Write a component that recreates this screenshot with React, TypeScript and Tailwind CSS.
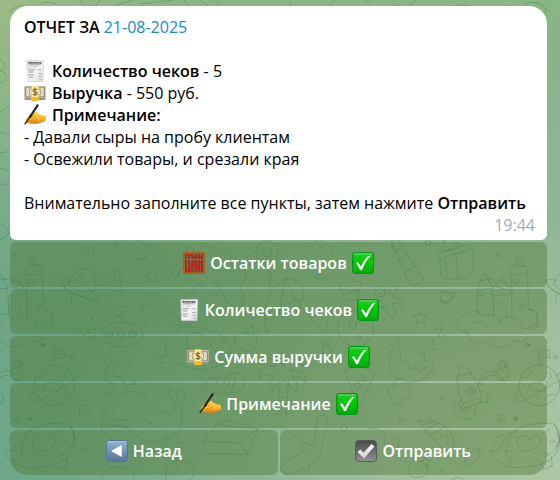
import React from "react";

type KeyButtonProps = { children: React.ReactNode; className?: string };
const iconClass = "inline-block h-[22px] w-[22px] shrink-0 align-top";

function ReceiptIcon() {
  return (
    <svg viewBox="0 0 22 22" className={iconClass} aria-hidden="true">
      <defs>
        <linearGradient id="paper" x1="0" y1="0" x2="1" y2="1">
          <stop offset="0" stopColor="#d9d9d9" />
          <stop offset="0.5" stopColor="#f5f5f5" />
          <stop offset="1" stopColor="#dcdcdc" />
        </linearGradient>
      </defs>
      <path d="M2.700 .5h17l-.7 21H3.500z" fill="url(#paper)" stroke="#cfcfcf" strokeWidth=".6" />
      <path d="M4.500 2.800h13.500" stroke="#5b5b5b" strokeWidth="1.800" strokeDasharray="1.500 .4" />
      <path d="M5.500 4.800h11.500" stroke="#909090" strokeWidth=".8" />
      <path d="M9 7h4" stroke="#b5b5b5" strokeWidth=".7" />
      <path d="M4.500 9.800h6.500M5 12h4.500M4.500 15h5.500M5 17.200h4" stroke="#949494" strokeWidth=".9" />
      <path d="M13 9.700h4.500M14 13.500h4M14 16.200h4M15 19.300h3" stroke="#aaa" strokeWidth=".8" />
    </svg>
  );
}

function MoneyIcon() {
  return (
    <svg viewBox="0 0 22 22" className={iconClass} aria-hidden="true">
      <path d="M.5 4.500h21v12.500l-.5 1H1l-.5-1z" fill="#9a927f" />
      <path d="M.5 4h21v12h-21z" fill="#cfc7b2" />
      <path d="M1.500 5.200h19v9.600h-19z" fill="none" stroke="#8b8473" strokeWidth=".8" />
      <path d="M3 7.500c2 0 2 5.500 0 5.500M19 7.500c-2 0-2 5.500 0 5.500" fill="none" stroke="#f2ecd9" strokeWidth="1.500" />
      <ellipse cx="11" cy="10.200" rx="5.800" ry="4.600" fill="#ece4cf" stroke="#8b8473" strokeWidth=".8" />
      <path d="M7.700 3.500h6.600v11.500h-6.600z" fill="#fff0a0" />
      <path d="M7.700 15h6.600v4h-6.600z" fill="#f2bd25" />
      <path d="M7.700 3.500v15.500M14.300 3.500v15.500" stroke="#f0cd52" strokeWidth=".8" />
      <path d="M13 7.800c-.7-1-3.900-1.300-3.900.6 0 2 4 1 4 3.100 0 2-3.400 1.800-4.200.5M11 5.600v8.400" fill="none" stroke="#75633c" strokeWidth="1.100" />
    </svg>
  );
}

function WritingIcon() {
  return (
    <svg viewBox="0 0 22 22" className={iconClass} aria-hidden="true">
      <defs>
        <linearGradient id="skin" x1="0" y1="0" x2="0" y2="1">
          <stop offset="0" stopColor="#ffd24b" />
          <stop offset=".6" stopColor="#fcb62d" />
          <stop offset="1" stopColor="#d97908" />
        </linearGradient>
      </defs>
      <path d="M2 16c.3-1.800 2.400-3.900 4-5.500 1.500-1.500 5-2.900 6.700-2.500 1 .3 1.200 1 .9 1.700 2 .1 3.200 1.300 4.700 1.600 1.200.2 2.600-.1 3.200.7.8 1.800.6 4.300-.4 5.500-2.500.2-3.800 1.500-6.600 1.900-3.800.5-8.500.4-10.700-.1-1.500-.4-2.200-1.500-1.800-3.300z" fill="url(#skin)" />
      <path d="M7.500 13.300c1.600-.2 3-1.200 4-2.300M4.500 16.200c2.200.3 4 .1 5.500-.9M12 13.800c.9 1.400 0 2.700-2 3.400" fill="none" stroke="#d98210" strokeWidth=".7" />
      <path d="M13.500 1.500L6 12.800" stroke="#171717" strokeWidth="2.200" strokeLinecap="round" />
      <path d="M5.800 13L1 19.800" stroke="#292929" strokeWidth="1.400" strokeLinecap="round" />
      <path d="M13 2.800L7 11.500" stroke="#626262" strokeWidth=".5" />
    </svg>
  );
}

function AbacusIcon() {
  return (
    <svg viewBox="0 0 22 22" className={iconClass} aria-hidden="true">
      <rect x="1" y="1" width="20" height="20" fill="#6b4a2c" stroke="#a5601f" strokeWidth="2" />
      <path d="M2 7.500h18" stroke="#a5601f" strokeWidth="1" />
      <path d="M4.500 2v18M7.700 2v18M11 2v18M14.300 2v18M17.500 2v18" stroke="#b98450" strokeWidth=".6" />
      <path d="M3.200 3.200h2.700M6.400 3.200h2.700M9.700 5.300h2.700M13 5.300h2.700M16.200 5.300h2.700M3.200 9.800h2.700M3.200 16.500h2.700M3.200 18.700h2.700M6.400 12h2.700M6.400 14.300h2.700M6.400 18.700h2.700M9.700 9.800h2.700M9.700 12h2.700M9.700 14.300h2.700M13 9.800h2.700M13 14.300h2.700M13 16.500h2.700M16.200 9.800h2.700M16.200 12h2.700M16.200 16.500h2.700M16.200 18.700h2.700" stroke="#d9161a" strokeWidth="1.700" />
    </svg>
  );
}

function CheckIcon() {
  return (
    <svg viewBox="0 0 22 22" className={iconClass} aria-hidden="true">
      <defs>
        <linearGradient id="green" x1="0" y1="0" x2="0" y2="1">
          <stop offset="0" stopColor="#35c53c" />
          <stop offset=".3" stopColor="#00cf05" />
          <stop offset="1" stopColor="#00ad07" />
        </linearGradient>
      </defs>
      <rect x=".6" y=".6" width="20.800" height="20.800" rx="2.800" fill="url(#green)" stroke="#07951a" strokeWidth="1.200" />
      <path d="M2.500 1.900h17" stroke="#6fda72" strokeWidth="1" strokeLinecap="round" />
      <path d="M3.800 11.300l2.100-1.200 3.100 4.300c1.800-4.100 4.200-7.700 7.200-10.400l2.400-.3c-3.600 4-6.400 8.600-8.400 14l-2.100.5c-1.100-2.700-2.600-5-4.300-6.900z" fill="white" />
    </svg>
  );
}

function BackIcon() {
  return (
    <svg viewBox="0 0 22 22" className={iconClass} aria-hidden="true">
      <defs>
        <linearGradient id="blue" x1="0" y1="0" x2="0" y2="1">
          <stop offset="0" stopColor="#94b2d4" />
          <stop offset=".5" stopColor="#7392b5" />
          <stop offset="1" stopColor="#587699" />
        </linearGradient>
      </defs>
      <rect x=".5" y=".5" width="21" height="21" rx="3" fill="url(#blue)" stroke="#557398" />
      <path d="M2.500 1.700h17" stroke="#b3c9e4" strokeLinecap="round" />
      <path d="M5 11l10.800-6v12z" fill="white" />
    </svg>
  );
}

function GrayCheckIcon() {
  return (
    <svg viewBox="0 0 22 22" className={iconClass} aria-hidden="true">
      <defs>
        <linearGradient id="gray" x1="0" y1="0" x2="0" y2="1">
          <stop offset="0" stopColor="#484848" />
          <stop offset="1" stopColor="#929292" />
        </linearGradient>
        <linearGradient id="silver" x1="0" y1="0" x2="0" y2="1">
          <stop offset="0" stopColor="white" />
          <stop offset="1" stopColor="#cfcfcf" />
        </linearGradient>
      </defs>
      <rect x=".5" y=".5" width="21" height="21" rx="3.500" fill="url(#gray)" stroke="#5b5b5b" />
      <path d="M2.500 12l2.700-2.600 3.500 3.300 7.800-8.700 2.900 2.600L9 18.500z" fill="url(#silver)" />
    </svg>
  );
}

/* One tile of the chat wallpaper; coordinates are thirds of a pixel. */
function Doodles() {
  return (
    <g>
      <g transform="translate(0 690)">
        {/* saucer, candy, star, fish */}
        <path d="M183 151c-6 25 80 64 112 60-9-15-17-26-30-36M183 151c8-5 22-3 32 2M207 164c5-34 32-52 57-48 17 8 26 30 18 63-26 15-62 3-75-15zM216 195l-4 24M268 210l5 16M189 168c20 24 60 38 95 36" />
        <circle cx="244" cy="134" r="7" /><circle cx="231" cy="149" r="4" />
        <path d="M342 125l19 1-4 14c12 6 12 21 4 29l7 18-25-3 2-15c-9-7-9-21 0-28zM345 147l17 9M344 162l16 9" />
        <path d="M460 123l3 12 11 2-9 8 3 13-12-6-13 5 4-13-9-9 13-2z" />
        <path d="M431 214c0-21 25-30 44-27-1 21-17 41-39 40l-10 17-2-12-7-7zM443 216l9-9M464 196l2 2" />
        <path d="M270 68c-5-8-13 3-5 9 15 8 23-12 12-21-13-10-32 0-26 17" />
        <path d="M345 30c10 35 44 65 75 59 22-5 39-25 41-43M347 20l88 45M365 10l90 40M410 85c4 13 28 5 28-11" />
        {/* submarine */}
        <ellipse cx="366" cy="314" rx="62" ry="37" />
        <circle cx="326" cy="313" r="12" /><circle cx="362" cy="314" r="12" /><circle cx="397" cy="314" r="12" />
        <circle cx="326" cy="313" r="6" /><circle cx="362" cy="314" r="6" /><circle cx="397" cy="314" r="6" />
        <path d="M304 303l-18-11-2 38 18-3M334 283c1-33 35-32 37-7M347 259c-2-24 10-29 30-28l1 12c-14-1-21 3-18 18M222 297q7-7 14 0t14 0 14 0 14 0M232 310q7-7 14 0t14 0 14 0M248 320q7-7 14 0t14 0" />
        {/* planet with flag */}
        <circle cx="163" cy="466" r="61" />
        <path d="M101 484c-30 43 8 39 55 6 39-28 87-41 75-56-6-5-14 0-21 4M162 404v-42l31-2 2 22-32 1M170 377q7-17 17-1M132 467c8-15 24-4 33-12 20-11 31 6 15 16 6 18-19 14-26 8-13 5-26-2-22-12zM110 440c20 8 20-8 35-20M105 459l14 8M180 510c4-14 18-17 28-18M192 428c8 5 8 12 3 19" />
        <circle cx="211" cy="381" r="5" /><circle cx="126" cy="345" r="5" /><circle cx="275" cy="265" r="3" />
        <path d="M312 383c8-6 17-1 20 6 4 10 15 3 17 15 3 14-12 17-11 28 2 14 21 2 30 12 8 10-3 25 11 35M312 383c-4 16 12 20 16 27-9 8-20 19-15 36 7 18 29 8 34 22l-4 12" />
        {/* whales */}
        <path d="M308 620c-16-78 25-141 91-135 48 4 64 47 89 64 29 6 43-7 40-31-20-10-27-29-20-38 10-2 22 8 22 20 3-15 10-27 20-20 14 19 4 33-13 43 22 45 5 89-40 104M305 590c55-16 88 8 111 32 20 17 60 20 85-1M310 600c27 47 67 70 116 72 28 2 48-7 69-27M498 614c20 26 40 33 54 20M320 579q20-12 63-8M330 590q22-7 50 1" />
        <circle cx="449" cy="581" r="4" />
        <path d="M496 398c-24 9-40-14-27-17 12-6 17 2 28-3-5-53 24-94 74-87 72 3 127 35 120 82-14 45-98 57-145 33-27-10-44-24-50-45M517 275q20 18 54 5M512 250c20-2 25 15 29 31" />
        <circle cx="321" cy="488" r="7" /><circle cx="401" cy="459" r="5" />
        <path d="M260 542c-5-9-15 1-6 8 12 8 22-10 12-20-14-14-38 4-28 23" />
        {/* heart rocket */}
        <path d="M44 654c22-60 94-83 164-72 27 48 18 99-33 118-44 18-130 18-130-9-25 3-25-12-28-27l27-5zM28 635c-8-17 20-13 29-23M111 665c-22-27-17-49 7-49 12 0 16 8 18 14 8-19 31-15 31 3 0 28-38 27-56 32zM94 600c-31 31-45 71-13 103M208 584c29 30 18 77-30 96M66 664l17-3M78 684l11-10M93 625l-13-6M180 605l13-6M195 635h15M180 667l11 9M211 610c19 10 19 25-1 41M169 700l5 18 28-10-3-29" />
        <circle cx="256" cy="657" r="6" /><circle cx="90" cy="566" r="5" />
        <path d="M305 750c5-35 37-45 70-37 24 10 32 26 26 45M500 750c-12-45 18-64 53-58 42 11 33 42 14 65M528 704l3-20" />
      </g>
      <g transform="translate(1110 690)">
        {/* crayon and gift */}
        <path d="M68 39c3-12 9-17 20-2l70 106c5 20-31 32-43 15zM71 69l35-22M82 91l35-25M104 128l40-23M116 153l35-22M64 32l4 28" />
        <path d="M204 70l92-29 9 15-96 32zM210 89l3 49c17 17 75 8 86 0 11-15 15-39 7-79M224 80l7 63M257 68l7 77M229 42c-12-27-16-4 8 20 10-30 21-21 33-17-5 13-22 13-33 17-13 4-27-1-25-12" />
        {/* castle on a cloud */}
        <path d="M322 257v-80l19-48 28 46-47 3M369 175l26-35 32 51-63 8zM370 199v59M418 130l25-48 32 42c-16 12-39 13-57 6zM425 134l1 139M473 132l2 103M370 249c-4-44 40-47 41 11M330 152l40-6M379 171l34 9M432 107l35 1M348 132l10 15M390 150l17 12M438 91l16 20" />
        <circle cx="439" cy="154" r="8" /><circle cx="458" cy="231" r="8" /><circle cx="336" cy="191" r="7" />
        <path d="M291 307c-41 3-35-54-2-52 11-19 39-18 46 2 24-11 48 0 52 21 19-29 69-17 69 16 26 7 40-11 46-24-1-30-11-31-27-31M291 307c10 44 48 40 62 28 24 32 75 10 79-6 22 14 37 4 41-6M475 240c34-5 36 49 14 63M310 281c20-15 43 0 42 14" />
        {/* gingerbread, small planet, star */}
        <circle cx="29" cy="184" r="17" />
        <path d="M42 196c14-3 17-31 33-27 15 7-5 21-8 31 15 4 36 2 34 16-4 12-21 5-35 2 3 15 18 35 5 44-14 4-18-19-31-33-13 4-31 15-34 3-2-11 12-16 25-20M18 180l2 2M32 175l2 2M24 192l13-4" />
        <circle cx="228" cy="202" r="18" /><path d="M211 207c-15 25 54-2 45-17-3-8-15 0-23 2" />
        <path d="M152 244l6 13 14 1-10 10 4 13-15-6-12 7 2-15-10-10 15-2z" />
        <circle cx="385" cy="75" r="6" /><circle cx="474" cy="345" r="5" /><circle cx="175" cy="37" r="8" />
        {/* sleeping moon */}
        <path d="M86 324c-36 50-39 108 0 122M86 324c7 25 1 53 8 66l22 9 6 20 18-4c10 20 31-8 47-18 11 21-15 63-75 59M151 401c12 2 16 11 9 19M130 405q10 13 17-1M75 454c12-16 39-5 35 13 29 15 6 40-7 33-8 34-47 24-39 1-22-20-7-40 9-32zM145 373l20-7-4 25 14 1M170 337l22-12-7 33 15-1M190 298l29-7-14 32 23-8" />
        {/* rocket and astronaut */}
        <path d="M270 413c12-16 27 7 40 28 15 25 26 51 23 76l-48 17c-17-37-34-84-15-121zM266 438l40-10M282 520l47-16M280 501l-15 16 14 25 17-10M333 482l22 13-3 24-18-2" />
        <circle cx="303" cy="485" r="14" /><circle cx="303" cy="485" r="7" />
        <path d="M259 509c-19 25 1 60 29 59 26-2 30-18 28-42M272 530c-5 13 13 27 30 1M325 465c8-37 31-53 62-34M333 469c5-28 25-39 46-30" />
        <circle cx="397" cy="405" r="14" /><circle cx="397" cy="405" r="8" />
        <path d="M385 414l-9 15 9 5 2 17h9l2-11 4 12 11-3-3-17 8-9-10-12" />
        <circle cx="212" cy="503" r="4" /><circle cx="91" cy="570" r="7" /><circle cx="437" cy="567" r="4" />
        <path d="M395 567c-5-7-11 3-3 7 9 3 17-8 9-16-11-8-24 7-16 18" />
        {/* cone, strawberry, pizza */}
        <path d="M145 571l29 2 6-11 7 13c23 1 69 23 66 80-20 20-50-9-62-28-19-16-34-34-46-56zM156 584l32-7M165 601l40-21M180 615l48-25M211 610l5 11M229 613l7 11M232 637l3 8" />
        <path d="M118 725c-5-25 12-43 39-28 28 11 18 45-12 45-16 3-25-3-27-17zM150 696l13-7 2-15 4 15 12 4-10 9 2 11-17-8M130 711l2 4M142 721l3 4M156 717l2 4M281 709c4-30 26-50 49-53-4 33-20 52-49 53zM0 596c33-5 52 16 43 44M65 629c20-15 38 6 17 13 12 17-11 18-13 0" />
        <path d="M242 750c16-12 40-8 49 5" /><circle cx="212" cy="724" r="5" />
      </g>
      <g transform="translate(555 705)">
        {/* guitar, umbrella, lollipop */}
        <path d="M-45 125L12 35l15 8-57 91M48 30c61 12 124 43 135 86 3 25-20 22-16 42 10 28 19 57-9 60-36-2-41-48-69-77M-20 120c-2-30 52-43 70-16M20 178c12-39 31-39 40-18" />
        <circle cx="246" cy="52" r="34" /><circle cx="246" cy="52" r="14" /><path d="M252 87l3 79" />
        <path d="M302 132c43-6 64 35 48 69l-22-11-23 33-23 15c-15 6-23 33-37 55-18-66 3-141 57-161zM302 132l26 58M299 133l-17 105M328 190l77 92c10 13 30-7 20-17" />
        <path d="M397 131c5-12 19-1 12 7-13 9-24-16-6-20 14-1 24 12 24 20M381 8l55 49c14-2 8-13 3-18L397 5" />
        {/* berry, cherry, wheel */}
        <path d="M467 165c-12-22 14-28 18-25 0-19 22-21 22 0 19-6 27 9 15 26M467 165h57l-9 28c-20 9-41 0-48-28zM476 180l42-11" />
        <circle cx="512" cy="280" r="54" /><ellipse cx="503" cy="267" rx="11" ry="15" /><circle cx="532" cy="247" r="8" /><circle cx="522" cy="309" r="6" />
        <path d="M150 304c20-20 43 0 49-8 25 7 22 42-2 52-28 3-52-20-47-44zM183 295l-4-21 12 12 11-17 2 21 13 7" />
        {/* palm */}
        <path d="M275 550l10-105M304 550l6-111M292 391c-8-33-36-40-52-22 24-2 32 18 31 27-30-12-51 9-49 34 18-17 33-10 48-6-19 13-18 39-11 49 6-24 22-26 37-37 12 16 28 18 37 36 12-22 1-37-12-45 15-6 33 1 40 16 6-28-20-43-42-34 6-16 22-23 37-16-17-33-52-20-64-2zM280 491l26-7M280 514l26-6M280 537l24-6" />
        {/* pizza and croissant */}
        <path d="M481 410c29-26 60-17 86 11l-46 92zM478 411c-3-23 67-29 96 8M495 435l54 4" /><circle cx="517" cy="452" r="9" /><circle cx="534" cy="427" r="6" />
        <path d="M60 447c15-24 38-25 56-11 17-35 55-28 61 2 4 23-8 36-36 34-31 5-69 11-81-25zM92 431l11 30M119 436l-8 32M140 416l-15 48M157 416l-18 52M412 355l2-24h20l4 25q-15 12-26-1zM418 331v-12h12v13" />
        {/* egg box, crocodile, flower */}
        <path d="M50 619l44-50 124 12-31 78-115-3zM50 619l114 4 54-42M164 623l23 36M95 569l29-12 67 13" />
        <path d="M285 700c22-29 48-35 71-50-11-24-5-33 10-24l17 8c16-48 9-76 16-90 29-13 38 14 19 52-9 36-7 78-43 91l-6 23-18-11c-25 22-48 30-66 1M327 601l16 18M365 650l14 10" />
        <circle cx="476" cy="580" r="9" /><path d="M7 315c-8-29 38-28 51-7 18 28 48 36 29 69-38 18-82-2-80-62z" />
      </g>
      {/* edges beside and above the message */}
      <path d="M30 35c20-25 51-23 61 2M112 20c32-35 95 8 62 20M240 0c5 35 71 21 65-20M340 17l60-17M420 12L520 0M553 0c9 22 28 27 60 38M600 0l70 50M645 0l34 50M870 5c0 39 41 42 44 12M990 20c2-37 96-43 122-8M1180 0c8 30 55 26 70-5M1330 35c25-28 100-27 113 5M1348 62c25-7 34 14 27 29l3 30M1365 86l21 25M1350 160l25-49M1346 230h35c22 0 3 64-35 115M1346 410c38-7 34 30 15 30 18 28-3 43-18 42M1346 560c18-36 59-30 72 0M1357 624c-20-11-27-48-9-67M1370 605c-4-34 13-52 39-49M1344 651c34-11 17 37 38 60M1430 182c37-13 50 19 25 31 27 3 26 38-7 35M1440 345l50-29M1432 402c42-12 73 9 57 38-12 25-34 20-57 11M1438 512c22-19 51 0 56 30 4 15-14 18-23 7-15 12-34 4-33-8zM1441 650l44 51-34 20" />
      <circle cx="1374" cy="189" r="5" />
    </g>
  );
}

function Wallpaper() {
  return (
    <svg
      viewBox="0 0 1680 1440"
      preserveAspectRatio="xMinYMin slice"
      className="pointer-events-none absolute inset-0 -z-10 h-full w-full fill-none stroke-[#2f6f45]/30"
      strokeWidth="3"
      strokeLinejoin="round"
      strokeLinecap="round"
      aria-hidden="true"
    >
      <Doodles />
      <g transform="translate(-1455 0)"><Doodles /></g>
      <g transform="translate(1455 0)"><Doodles /></g>
    </svg>
  );
}

function KeyButton({ children, className = "" }: KeyButtonProps) {
  return (
    <button
      type="button"
      className={`flex h-[45px] w-full items-center justify-center gap-[5px] rounded-md bg-[#4f7a38]/45 pb-[3px] font-semibold text-white ${className}`}
    >
      {children}
    </button>
  );
}

export default function App() {
  return (
    <main className="relative isolate min-h-screen overflow-hidden bg-[radial-gradient(circle_at_0%_0%,#9bbb84_0%,transparent_22%),radial-gradient(ellipse_at_100%_100%,#b0c7a4_0%,#a0bf9d_22%,transparent_65%),linear-gradient(180deg,#89b684_0%,#7fb18a_30%,#6da586_65%,#6fa78a_100%)] pt-1.5 pr-[13px] pb-1 pl-2.5 font-['Open_Sans','Noto_Sans',sans-serif] text-base leading-[22px] text-black">
      <Wallpaper />
      <div className="flex flex-col gap-0.5">
        <article className="rounded-t-[18px] rounded-b-md bg-white px-3.5 pt-2.5 pb-1">
          <p>
            <span className="font-semibold">ОТЧЕТ ЗА</span>{" "}
            <a href="#date" className="text-[#168acd]">21-08-2025</a>
          </p>
          <div className="mt-[22px]">
            <p className="flex gap-1.5"><ReceiptIcon /><span><b className="font-semibold">Количество чеков</b> - 5</span></p>
            <p className="flex gap-1.5"><MoneyIcon /><span><b className="font-semibold">Выручка</b> - 550 руб.</span></p>
            <p className="flex gap-1.5"><WritingIcon /><b className="font-semibold">Примечание:</b></p>
            <p>- Давали сыры на пробу клиентам</p>
            <p>- Освежили товары, и срезали края</p>
          </div>
          <p className="mt-[22px]">
            Внимательно заполните все пункты, затем нажмите <b className="font-semibold">Отправить</b>
          </p>
          <time className="-mr-0.5 block text-right text-[#a0acb6]">19:44</time>
        </article>
        <KeyButton><AbacusIcon /><span>Остатки товаров</span><CheckIcon /></KeyButton>
        <KeyButton><ReceiptIcon /><span>Количество чеков</span><CheckIcon /></KeyButton>
        <KeyButton><MoneyIcon /><span>Сумма выручки</span><CheckIcon /></KeyButton>
        <KeyButton><WritingIcon /><span>Примечание</span><CheckIcon /></KeyButton>
        <div className="grid grid-cols-2 gap-0.5">
          <KeyButton className="rounded-bl-[18px]"><BackIcon /><span>Назад</span></KeyButton>
          <KeyButton className="rounded-br-[18px]"><GrayCheckIcon /><span>Отправить</span></KeyButton>
        </div>
      </div>
    </main>
  );
}
